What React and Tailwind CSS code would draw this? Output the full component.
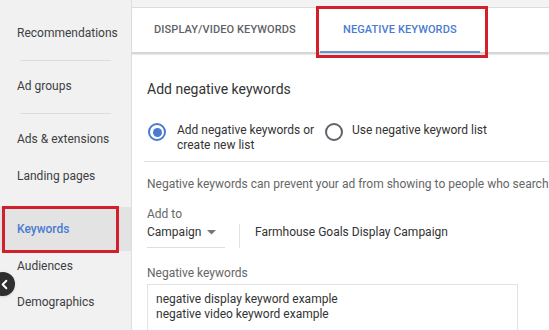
import { ChevronLeft } from "lucide-react";

function NavItem({ children, className = "" }) {
  return (
    <div className={"h-[18px] pl-[17px] text-[12px] leading-[18px] text-[#3c4043] " + className}>
      {children}
    </div>
  );
}

function Sidebar() {
  return (
    <aside className="relative w-[132px] shrink-0 bg-[#f1f1f1] border-r border-[#dedede] pt-[24px]">
      <div className="flex flex-col">
        <NavItem>Recommendations</NavItem>
        <div className="mx-[20px] mt-[18px] mb-[16px] h-px bg-[#dcdcdc]" />
        <NavItem>Ad groups</NavItem>
        <div className="mx-[20px] mt-[18px] mb-[16px] h-px bg-[#dcdcdc]" />
        <NavItem>Ads &amp; extensions</NavItem>
        <NavItem className="mt-[19px]">Landing pages</NavItem>
        <div className="relative mt-[22px] h-[44px] bg-[#e3e3e3] flex items-center pl-[17px]">
          <span className="text-[12px] font-medium text-[#4a7bd0]">Keywords</span>
          <div className="absolute left-[2px] top-[-1px] w-[117px] h-[47px] border-[3px] border-[#d21f2c]" />
        </div>
        <NavItem className="mt-[6px]">Audiences</NavItem>
        <NavItem className="mt-[18px]">Demographics</NavItem>
      </div>
      <div className="absolute left-[-9px] top-[272px] w-[24px] h-[24px] rounded-full bg-[#2f2f2f] flex items-center justify-end pr-[3px] shadow">
        <ChevronLeft size={15} strokeWidth={3} color="#fff" />
      </div>
    </aside>
  );
}

function Radio({ checked }) {
  return (
    <span
      className={
        "w-[18px] h-[18px] shrink-0 rounded-full border-2 flex items-center justify-center " +
        (checked ? "border-[#4a7bd0]" : "border-[#5f6368]")
      }
    >
      {checked && <span className="w-[9px] h-[9px] rounded-full bg-[#4a7bd0]" />}
    </span>
  );
}

export default function App() {
  return (
    <div
      className="w-[549px] h-[330px] overflow-hidden flex bg-white"
      style={{ fontFamily: "Roboto, 'Liberation Sans', sans-serif" }}
    >
      <Sidebar />
      <main className="flex-1 flex flex-col min-w-0 bg-white">
        <div className="shrink-0 h-[8px] bg-[#f3f3f3] border-b border-[#dcdcdc]" />
        <div className="relative shrink-0 h-[46px] flex items-stretch border-b-2 border-[#d6d6d6] shadow-[0_1px_1px_rgba(0,0,0,0.08)]">
          <div className="flex items-center pl-[22px] pr-[24px] text-[11px] font-medium tracking-[0.1px] text-[#5f6368]">
            DISPLAY/VIDEO KEYWORDS
          </div>
          <div className="relative flex items-center w-[160px] justify-center text-[11px] font-medium tracking-[0.1px] text-[#4a7bd0]">
            NEGATIVE KEYWORDS
            <div className="absolute left-0 right-0 bottom-[-1px] h-[2px] bg-[#6d93d6]" />
            <div className="absolute left-[-4px] right-[-8px] top-[-2px] bottom-[-6px] border-[3px] border-[#d21f2c]" />
          </div>
        </div>
        <div className="flex-1 pl-[15px] pt-[26px]">
          <div className="text-[14px] leading-[18px] text-[#333]">Add negative keywords</div>
          <div className="mt-[25px] ml-[1px] flex items-start text-[12px] leading-[15px] text-[#333]">
            <div className="flex items-start gap-[11px]">
              <Radio checked />
              <div className="w-[148px]">
                Add negative keywords or
                <br />
                create new list
              </div>
            </div>
            <div className="flex items-start gap-[9px]">
              <Radio />
              <div>Use negative keyword list</div>
            </div>
          </div>
          <div className="mt-[8px] ml-[-3px] h-px bg-[#e3e3e3]" />
          <div className="mt-[14px] whitespace-nowrap text-[12px] leading-[16px] text-[#666]">
            Negative keywords can prevent your ad from showing to people who search
          </div>
          <div className="mt-[14px] text-[12px] leading-[16px] text-[#666]">Add to</div>
          <div className="mt-[2px] flex items-stretch">
            <div className="w-[78px] h-[24px] border-b border-[#dedede] flex items-start text-[12px] leading-[16px] text-[#333]">
              Campaign
              <svg width="9" height="5" viewBox="0 0 9 5" className="ml-[6px] mt-[6px]">
                <path d="M0 0h9L4.5 4.5z" fill="#777" />
              </svg>
            </div>
            <div className="ml-[14px] w-px h-[24px] bg-[#e3e3e3]" />
            <div className="ml-[15px] text-[12px] leading-[16px] text-[#333]">Farmhouse Goals Display Campaign</div>
          </div>
          <div className="mt-[17px] text-[12px] leading-[16px] text-[#666]">Negative keywords</div>
          <div className="mt-[3px] w-[371px] h-[60px] border border-[#e3e3e3] pl-[8px] pt-[7px] text-[12px] leading-[15px] text-[#333]">
            negative display keyword example
            <br />
            negative video keyword example
          </div>
        </div>
      </main>
    </div>
  );
}
